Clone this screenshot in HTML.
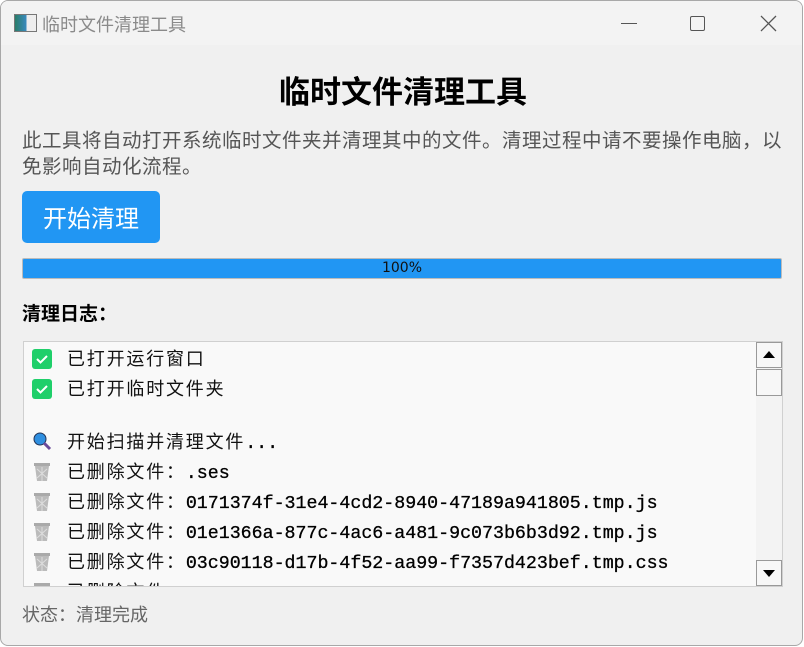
<!DOCTYPE html>
<html><head><meta charset="utf-8"><style>
*{margin:0;padding:0;box-sizing:border-box}
body{width:804px;height:647px;background:#fff;position:relative;overflow:hidden;font-family:"Liberation Sans","Noto Sans CJK SC",sans-serif}
.win{position:absolute;left:0;top:0;width:803px;height:646px;background:#f0f0f0;border:1px solid #a8a8a8;border-radius:8px;overflow:hidden}
.tb{position:absolute;left:0;top:0;right:0;height:44px;background:#f3f3f3}
.a{position:absolute;white-space:nowrap}
.cjk{font-family:"Noto Sans CJK SC",sans-serif}
.log{position:absolute;left:22px;top:340px;width:760px;height:246px;background:#f9f9f9;border:1px solid #d0d0d0;overflow:hidden}
.ln{position:absolute;left:43px;font-size:18px;letter-spacing:1.8px;color:#111;font-family:"Noto Sans CJK SC",sans-serif;white-space:nowrap;line-height:20px}
.m{font-family:"Liberation Mono",monospace;font-size:18.3px;letter-spacing:0;color:#000;-webkit-text-stroke:0.3px #000}
.ic{position:absolute;left:8px;width:20px;height:20px}
</style></head><body>
<div class="win">
<div class="tb">
<div class="a" style="left:13px;top:13px;width:23px;height:18px;border:1px solid #777;background:linear-gradient(90deg,#2a7d6a 0,#3a8ac0 55%,#eee 55%)"></div>
<div class="a cjk" style="left:41px;top:10px;font-size:18px;color:#8a8a8a">临时文件清理工具</div>
<div class="a" style="left:620px;top:22px;width:16px;height:1px;background:#555"></div>
<div class="a" style="left:689px;top:15px;width:15px;height:15px;border:1.3px solid #555;border-radius:2px"></div>
<svg class="a" style="left:759px;top:14px" width="17" height="17"><path d="M1 1L16 16M16 1L1 16" stroke="#555" stroke-width="1.3"/></svg>
</div>
<div class="a cjk" style="left:0;width:804px;text-align:center;top:66px;font-size:31px;font-weight:bold;color:#000">临时文件清理工具</div>
<div class="a cjk" style="left:21px;top:123px;font-size:19.5px;letter-spacing:0.5px;color:#555">此工具将自动打开系统临时文件夹并清理其中的文件。清理过程中请不要操作电脑，以</div>
<div class="a cjk" style="left:21px;top:149px;font-size:19.5px;letter-spacing:0.5px;color:#555">免影响自动化流程。</div>
<div class="a cjk" style="left:21px;top:190px;width:138px;height:52px;background:#2196f3;border-radius:5px;color:#fff;font-size:24px;text-align:center;line-height:52px">开始清理</div>
<div class="a" style="left:21px;top:257px;width:760px;height:21px;background:#2196f3;border:1px solid #bbb;border-radius:2px;text-align:center;font-size:14px;line-height:19px;color:#111;font-family:'DejaVu Sans',sans-serif">100%</div>
<div class="a cjk" style="left:21px;top:298px;font-size:19px;font-weight:bold;color:#000">清理日志：</div>
<div class="log">
<div class="ic" style="top:7px;background:#1fcf6a;border-radius:3px"><svg width="20" height="20"><path d="M5 10l3.5 3.5L15 7" stroke="#fff" stroke-width="2" fill="none"/></svg></div>
<div class="ln" style="top:6px">已打开运行窗口</div>
<div class="ic" style="top:37px;background:#1fcf6a;border-radius:3px"><svg width="20" height="20"><path d="M5 10l3.5 3.5L15 7" stroke="#fff" stroke-width="2" fill="none"/></svg></div>
<div class="ln" style="top:36px">已打开临时文件夹</div>
<svg class="ic" style="top:89px" width="20" height="20"><circle cx="8" cy="8" r="6" fill="#2f8fe0" stroke="#235" stroke-width="1"/><path d="M12 12l6 6" stroke="#6a4a9a" stroke-width="3"/></svg>
<div class="ln" style="top:89px">开始扫描并清理文件<span class="m">...</span></div>
<svg class="ic" style="top:120px" width="20" height="20"><rect x="2" y="1" width="16" height="3" fill="#aaa"/><path d="M3 4h14l-2 15H5z" fill="#bbb"/><path d="M5 7l10 9M15 7L5 16M10 5v14" stroke="#ddd"/></svg>
<div class="ln" style="top:119px">已删除文件：<span class="m">.ses</span></div>
<svg class="ic" style="top:150px" width="20" height="20"><rect x="2" y="1" width="16" height="3" fill="#aaa"/><path d="M3 4h14l-2 15H5z" fill="#bbb"/><path d="M5 7l10 9M15 7L5 16M10 5v14" stroke="#ddd"/></svg>
<div class="ln" style="top:149px">已删除文件：<span class="m">0171374f-31e4-4cd2-8940-47189a941805.tmp.js</span></div>
<svg class="ic" style="top:180px" width="20" height="20"><rect x="2" y="1" width="16" height="3" fill="#aaa"/><path d="M3 4h14l-2 15H5z" fill="#bbb"/><path d="M5 7l10 9M15 7L5 16M10 5v14" stroke="#ddd"/></svg>
<div class="ln" style="top:179px">已删除文件：<span class="m">01e1366a-877c-4ac6-a481-9c073b6b3d92.tmp.js</span></div>
<svg class="ic" style="top:210px" width="20" height="20"><rect x="2" y="1" width="16" height="3" fill="#aaa"/><path d="M3 4h14l-2 15H5z" fill="#bbb"/><path d="M5 7l10 9M15 7L5 16M10 5v14" stroke="#ddd"/></svg>
<div class="ln" style="top:209px">已删除文件：<span class="m">03c90118-d17b-4f52-aa99-f7357d423bef.tmp.css</span></div>
<svg class="ic" style="top:240px" width="20" height="20"><rect x="2" y="1" width="16" height="3" fill="#aaa"/></svg>
<div class="ln" style="top:239px">已删除文件：</div>
<div class="a" style="left:732px;top:0;width:26px;height:244px;background:#f3f3f3"></div>
<div class="a" style="left:732px;top:0;width:26px;height:26px;background:#f7f7f7;border:1px solid #999"><svg width="24" height="24"><path d="M6 15h12L12 8z" fill="#000"/></svg></div>
<div class="a" style="left:732px;top:27px;width:26px;height:27px;background:#f7f7f7;border:1px solid #999"></div>
<div class="a" style="left:732px;top:218px;width:26px;height:26px;background:#f7f7f7;border:1px solid #999"><svg width="24" height="24"><path d="M6 9h12l-6 7z" fill="#000"/></svg></div>
</div>
<div class="a cjk" style="left:21px;top:600px;font-size:18px;color:#666">状态：清理完成</div>
</div>
</body></html>
